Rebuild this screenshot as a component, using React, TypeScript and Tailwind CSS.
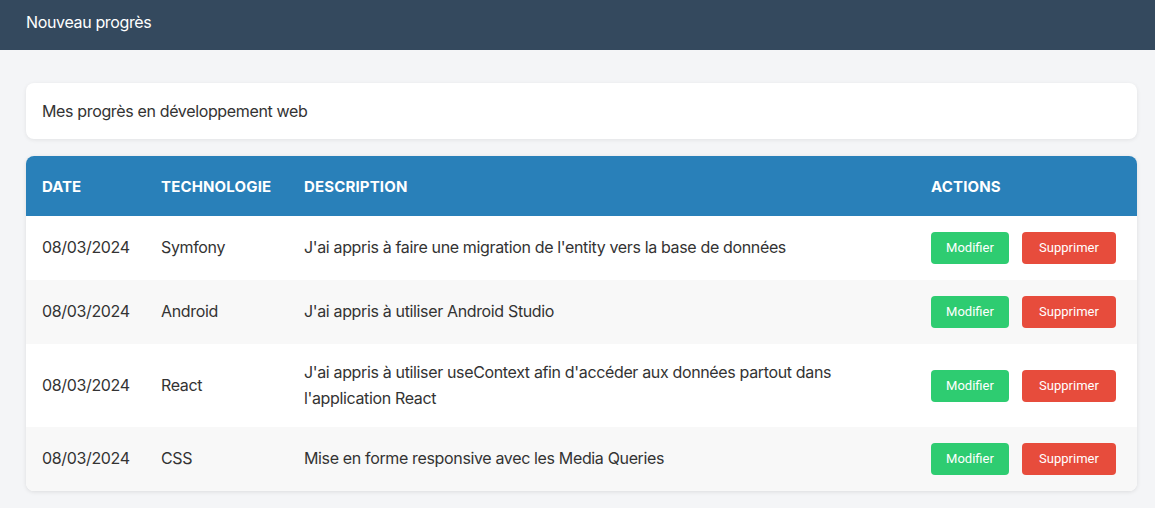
import React from "react";

const rows = [
  { date: "08/03/2024", tech: "Symfony", desc: "J'ai appris à faire une migration de l'entity vers la base de données" },
  { date: "08/03/2024", tech: "Android", desc: "J'ai appris à utiliser Android Studio" },
  { date: "08/03/2024", tech: "React", desc: "J'ai appris à utiliser useContext afin d'accéder aux données partout dans l'application React" },
  { date: "08/03/2024", tech: "CSS", desc: "Mise en forme responsive avec les Media Queries" },
];

export default function App() {
  return (
    <div className="min-h-[508px] bg-[#f4f5f7] text-[#333333]" style={{ fontFamily: "Inter, 'Noto Sans', sans-serif" }}>
      <header className="h-[50px] bg-[#34495e] flex items-center pl-[26px] pb-[6px]">
        <span className="text-white text-[16px] tracking-[-0.022em]">Nouveau progrès</span>
      </header>
      <main className="pl-[26px] pr-[18px] pt-[33px]">
        <div className="bg-white rounded-[8px] shadow-[0_1px_4px_rgba(0,0,0,0.08)] h-[56px] flex items-center px-[16px] text-[16px] tracking-[-0.022em]">
          Mes progrès en développement web
        </div>
        <div className="mt-[17px] rounded-[8px] overflow-hidden bg-white shadow-[0_1px_4px_rgba(0,0,0,0.1)]">
          <table className="w-full border-collapse table-fixed text-[16px]">
            <colgroup>
              <col className="w-[119px]" />
              <col className="w-[143px]" />
              <col />
              <col className="w-[222px]" />
            </colgroup>
            <thead>
              <tr className="bg-[#2980b9] h-[60px] text-white text-left">
                <th className="px-[16px] pt-[3px] font-bold text-[15px]">DATE</th>
                <th className="px-[16px] pt-[3px] font-bold text-[15px] tracking-[0.01em]">TECHNOLOGIE</th>
                <th className="px-[16px] pt-[3px] font-bold text-[15px] tracking-[0.01em]">DESCRIPTION</th>
                <th className="px-[16px] pt-[3px] font-bold text-[15px] tracking-[0.01em]">ACTIONS</th>
              </tr>
            </thead>
            <tbody className="tracking-[-0.022em]">
              {rows.map((r, i) => (
                <tr key={i} className={i % 2 === 1 ? "bg-[#f8f8f8]" : "bg-white"}>
                  <td className="px-[16px] py-[16px] leading-[25.5px]">{r.date}</td>
                  <td className="px-[16px] py-[16px] leading-[25.5px]">{r.tech}</td>
                  <td className="px-[16px] py-[16px] leading-[25.5px]">{r.desc}</td>
                  <td className="px-[16px] py-[16px]">
                    <div className="flex gap-[13px] tracking-normal" style={{ fontFamily: "Roboto, 'Liberation Sans', sans-serif" }}>
                      <button className="h-[32px] w-[78px] rounded-[4px] bg-[#2ecc71] text-white text-[13px]">Modifier</button>
                      <button className="h-[32px] w-[94px] rounded-[4px] bg-[#e74c3c] text-white text-[13px]">Supprimer</button>
                    </div>
                  </td>
                </tr>
              ))}
            </tbody>
          </table>
        </div>
      </main>
    </div>
  );
}
